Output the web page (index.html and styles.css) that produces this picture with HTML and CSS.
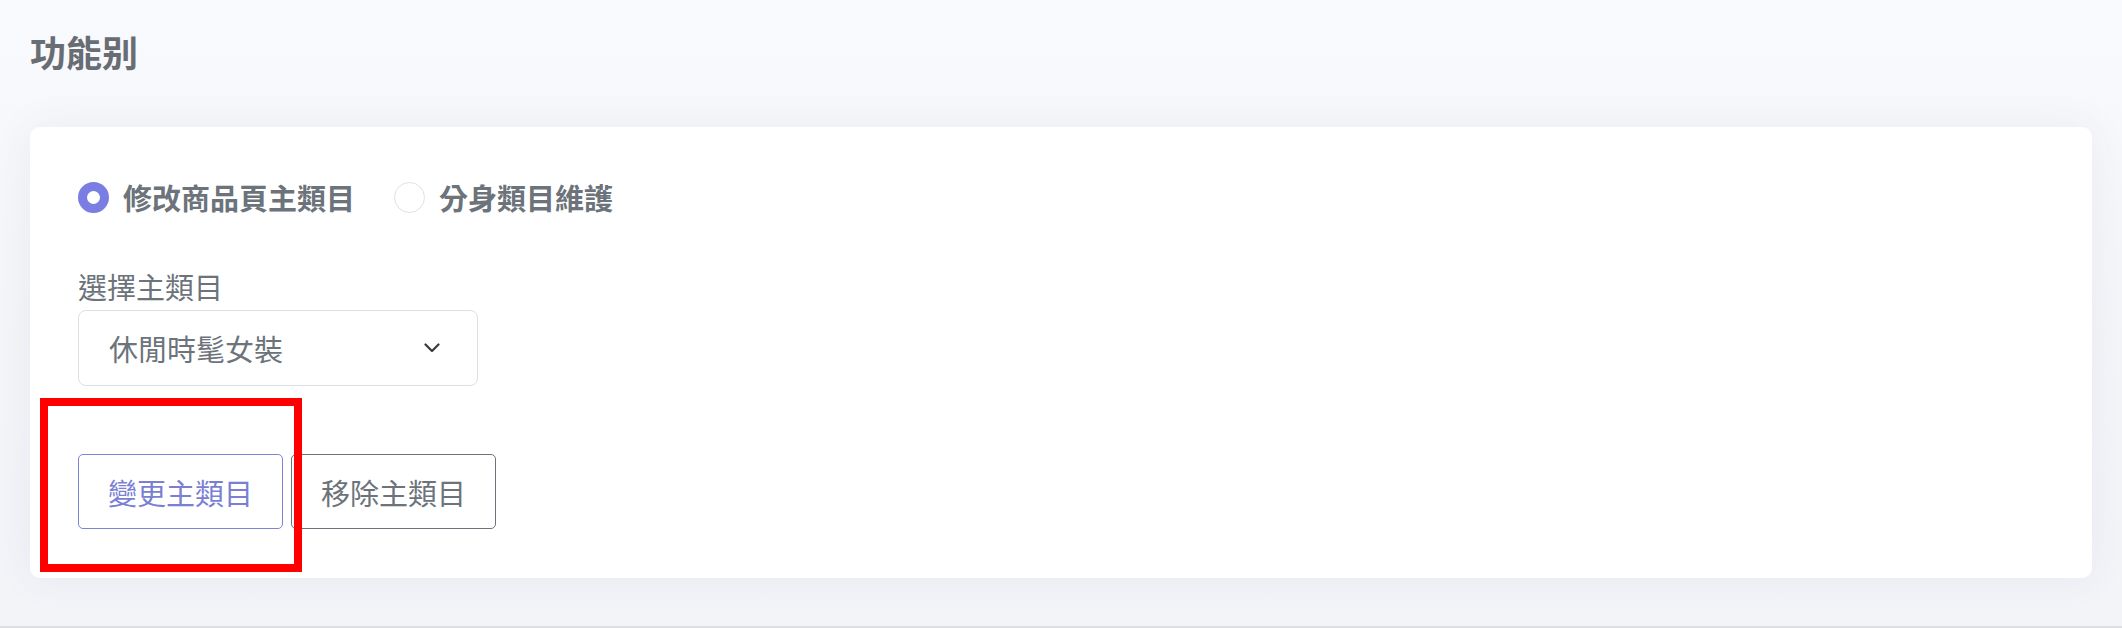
FILE: index.html
```html
<!DOCTYPE html>
<html lang="zh-Hant">
<head>
<meta charset="utf-8">
<title>功能别</title>
<link rel="stylesheet" href="styles.css">
</head>
<body>
<div class="page">
  <h1 class="page-title">功能别</h1>
  <div class="card">
    <div class="radio-row">
      <label class="radio-item">
        <span class="radio radio-checked"></span>
        <span class="radio-text">修改商品頁主類目</span>
      </label>
      <label class="radio-item">
        <span class="radio"></span>
        <span class="radio-text">分身類目維護</span>
      </label>
    </div>
    <div class="field-label">選擇主類目</div>
    <div class="select">
      <span class="select-value">休閒時髦女裝</span>
      <svg class="chevron" width="16" height="10" viewBox="0 0 16 10"><path d="M1.5 1.5 L8 8 L14.5 1.5" fill="none" stroke="#343a40" stroke-width="2.2" stroke-linecap="round" stroke-linejoin="round"/></svg>
    </div>
    <div class="btn-row">
      <span class="highlight"></span>
      <button class="btn btn-primary">變更主類目</button>
      <button class="btn btn-secondary">移除主類目</button>
    </div>
  </div>
</div>
<div class="bottom-line"></div>
</body>
</html>
```
FILE: styles.css
```css
* { box-sizing: border-box; }
html, body { margin: 0; padding: 0; }
body {
  font-family: "Noto Sans CJK TC", "Noto Sans", sans-serif;
  background: linear-gradient(180deg, #f9fafd 0%, #f5f6f9 40%, #f3f4f8 100%);
  height: 628px;
  overflow: hidden;
}
.page {
  height: 626px;
  padding: 25px 30px 0 30px;
}
.page-title {
  margin: 0;
  font-size: 36px;
  line-height: 52px;
  font-weight: 700;
  color: #686d74;
}
.card {
  margin-top: 50px;
  background: #ffffff;
  border-radius: 10px;
  box-shadow: 0 0 40px rgba(60, 70, 120, 0.07);
  padding: 50px 48px 49px 48px;
}
.radio-row {
  display: flex;
  align-items: center;
  height: 40px;
  gap: 39px;
}
.radio-item {
  display: flex;
  align-items: center;
  gap: 14px;
}
.radio {
  width: 31px;
  height: 31px;
  border-radius: 50%;
  border: 1.5px solid #dfe1e5;
  background: #ffffff;
}
.radio-checked {
  border: 9px solid #7a7ee2;
  background: #ffffff;
}
.radio-text {
  font-size: 29px;
  line-height: 40px;
  font-weight: 700;
  color: #6c737a;
}
.field-label {
  margin-top: 51px;
  font-size: 29px;
  line-height: 36px;
  color: #6c737a;
}
.select {
  margin-top: 6px;
  width: 400px;
  height: 76px;
  border: 1.5px solid #dcdfe3;
  border-radius: 8px;
  display: flex;
  align-items: center;
  justify-content: space-between;
  padding: 0 37px 0 30px;
}
.select-value {
  font-size: 29px;
  color: #6c737a;
}
.btn-row {
  position: relative;
  margin-top: 68px;
  display: flex;
  gap: 8px;
}
.btn {
  height: 75px;
  width: 205px;
  border-radius: 5px;
  background: #ffffff;
  font-family: "Noto Sans CJK TC", "Noto Sans", sans-serif;
  font-size: 29px;
  padding: 0;
}
.btn-primary {
  border: 1.5px solid #7f84d6;
  color: #7a7fd3;
}
.btn-secondary {
  border: 1.5px solid #6c737a;
  color: #6c737a;
}
.highlight {
  position: absolute;
  left: -38px;
  top: -56px;
  width: 262px;
  height: 174px;
  border: 8px solid #ff0000;
  pointer-events: none;
}
.bottom-line {
  height: 2px;
  background: #dcdee2;
}
```
